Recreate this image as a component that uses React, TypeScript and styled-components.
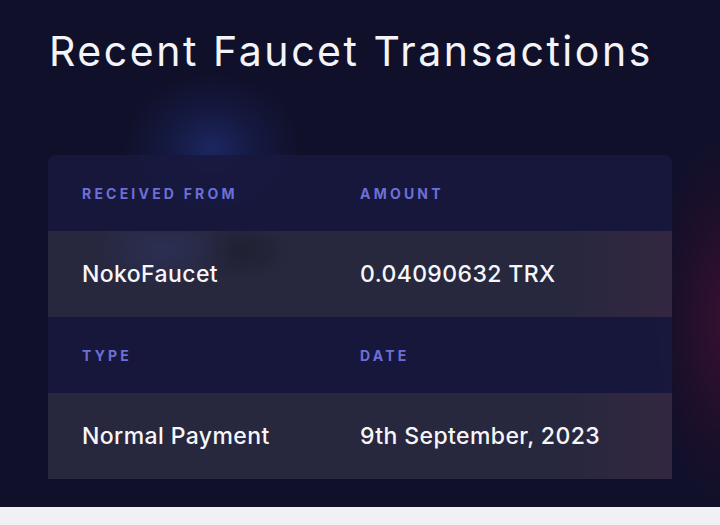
import React from 'react'
import styled, { createGlobalStyle } from 'styled-components'

const GlobalStyle = createGlobalStyle`
  html, body {
    margin: 0;
    padding: 0;
    background: #f1f1f5;
  }
  body {
    font-family: Inter, "Noto Sans", sans-serif;
  }
`

type Row = { label: string; value: string }

const rows: Row[][] = [
  [
    { label: 'Received From', value: 'NokoFaucet' },
    { label: 'Amount', value: '0.04090632 TRX' },
  ],
  [
    { label: 'Type', value: 'Normal Payment' },
    { label: 'Date', value: '9th September, 2023' },
  ],
]

export default function App() {
  return (
    <>
      <GlobalStyle />
      <Page>
        <Title>Recent Faucet Transactions</Title>
        <Card>
          {rows.map((pair, i) => (
            <React.Fragment key={i}>
              <HeadRow>
                {pair.map(c => (
                  <HeadCell key={c.label}>{c.label}</HeadCell>
                ))}
              </HeadRow>
              <DataRow $glow={i === 0}>
                {pair.map(c => (
                  <DataCell key={c.label}>{c.value}</DataCell>
                ))}
              </DataRow>
            </React.Fragment>
          ))}
        </Card>
      </Page>
    </>
  )
}

const Page = styled.div`
  height: 507px;
  box-sizing: border-box;
  padding: 26px 48px 0;
  background:
    radial-gradient(ellipse 90px 75px at 212px 148px, rgba(40, 62, 150, 0.5) 0, rgba(40, 60, 150, 0.2) 50%, rgba(16, 16, 42, 0) 100%),
    radial-gradient(ellipse 80px 190px at 730px 320px, rgba(70, 16, 52, 0.75) 0, rgba(50, 14, 44, 0.4) 60%, rgba(16, 16, 42, 0) 100%),
    #10102a;
  overflow: hidden;
`

const Title = styled.h1`
  margin: 0 0 0 1px;
  font-size: 41px;
  font-weight: 400;
  letter-spacing: 2.55px;
  line-height: 50px;
  color: #f4f4f8;
`

const Card = styled.div`
  margin-top: 79px;
  border-radius: 8px 8px 0 0;
  overflow: hidden;
`

const HeadRow = styled.div`
  display: grid;
  grid-template-columns: 278px 1fr;
  height: 76px;
  align-items: center;
  background: rgba(24, 24, 62, 0.9);
`

const DataRow = styled.div<{ $glow?: boolean }>`
  display: grid;
  grid-template-columns: 278px 1fr;
  height: 86px;
  align-items: center;
  background:
    ${p => (p.$glow
      ? 'radial-gradient(ellipse 70px 40px at 115px 18px, rgba(50, 62, 120, 0.35) 0, rgba(50, 62, 120, 0) 100%), radial-gradient(ellipse 50px 30px at 195px 20px, rgba(20, 20, 30, 0.35) 0, rgba(20, 20, 30, 0) 100%),'
      : '')}
    linear-gradient(90deg, rgba(40, 40, 64, 0) 82%, rgba(70, 40, 68, 0.4) 100%),
    rgba(40, 40, 64, 0.94);
`

const HeadCell = styled.div`
  padding-left: 34px;
  font-size: 14px;
  font-weight: 700;
  letter-spacing: 3.2px;
  text-transform: uppercase;
  color: #6d6fd8;
`

const DataCell = styled.div`
  padding-left: 34px;
  font-size: 23px;
  font-weight: 500;
  letter-spacing: 0.4px;
  color: #f6f6fa;
`
